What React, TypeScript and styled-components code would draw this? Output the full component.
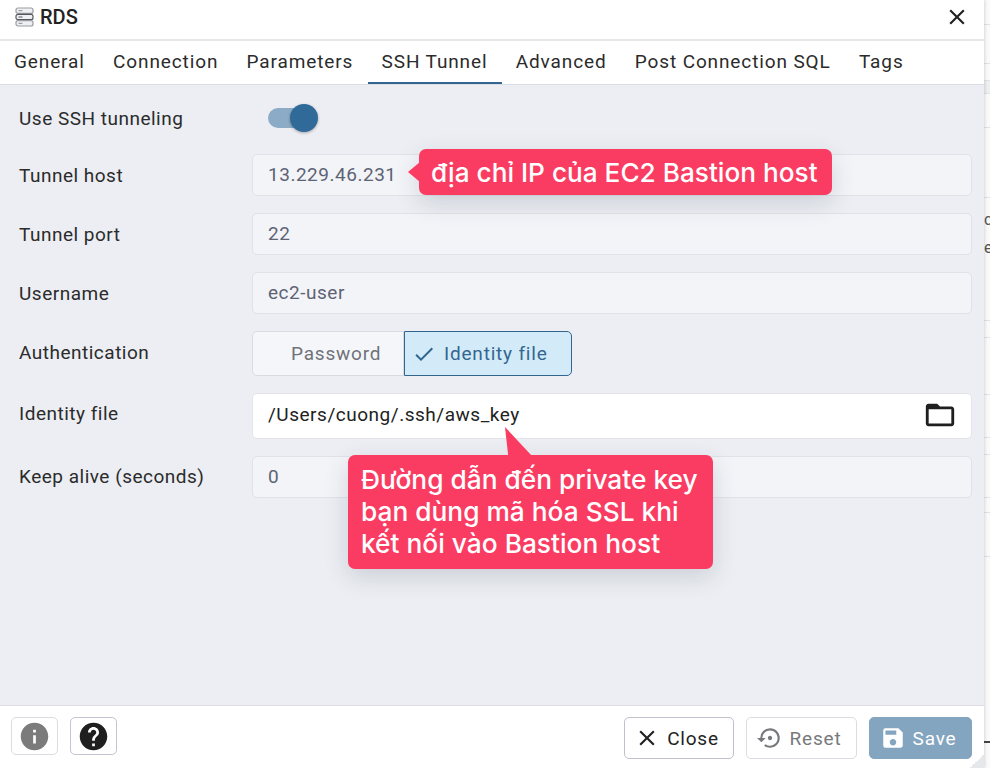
import React from 'react';
import styled, {createGlobalStyle} from 'styled-components';
import {MdCheck, MdClose, MdFolderOpen, MdHelp, MdInfo, MdSave, MdSettingsBackupRestore} from 'react-icons/md';

const GlobalStyle = createGlobalStyle`
  html, body {
    margin: 0;
    padding: 0;
    background: #fff;
  }
  body {
    font-family: Roboto, "Liberation Sans", sans-serif;
    color: #222;
  }
`;

const Page = styled.div`
  position: relative;
  display: flex;
  width: 990px;
  height: 768px;
  overflow: hidden;
`;

const Dialog = styled.div`
  display: flex;
  flex-direction: column;
  width: 984px;
  height: 768px;
  background: #fff;
  box-shadow: 1px 0 3px rgba(0, 0, 0, 0.14);
  position: relative;
  z-index: 1;
`;

const TitleBar = styled.div`
  display: flex;
  align-items: center;
  height: 41px;
  padding: 0 14px 5px 15px;
  box-sizing: border-box;
  border-bottom: 2px solid #e6e7ea;
  flex: none;
`;

const TitleText = styled.span`
  flex: 1;
  margin-left: 5px;
  font-size: 20px;
  font-weight: 500;
  color: #222;
`;

const TabBar = styled.div`
  display: flex;
  height: 44px;
  flex: none;
  box-sizing: border-box;
  border-bottom: 1px solid #dcdee3;
`;

const Tab = styled.div<{$active?: boolean}>`
  display: flex;
  align-items: center;
  height: 43px;
  padding: 0 14.3px 0 14px;
  box-sizing: border-box;
  font-size: 19px;
  letter-spacing: 0.88px;
  color: #2b2b2b;
  border-bottom: 2px solid ${p => (p.$active ? '#326690' : 'transparent')};
`;

const FormBody = styled.div`
  flex: 1;
  display: flex;
  flex-direction: column;
  gap: 17px;
  padding: 17px 12px 0 19px;
  background: #eceef3;
`;

const Row = styled.div<{$height: number}>`
  display: grid;
  grid-template-columns: 233px 1fr;
  align-items: center;
  height: ${p => p.$height}px;
`;

const Label = styled.label<{$lift?: number}>`
  margin-bottom: ${p => p.$lift || 0}px;
  font-size: 19px;
  letter-spacing: 0.5px;
  color: #2b2b2b;
`;

const Input = styled.div<{$editable?: boolean}>`
  display: flex;
  align-items: center;
  justify-content: space-between;
  height: 100%;
  padding: 0 14px ${p => (p.$editable ? 3 : 2)}px 15px;
  box-sizing: border-box;
  border: 1px solid ${p => (p.$editable ? '#e4e5ea' : '#e0e2e8')};
  border-radius: 5px;
  background: ${p => (p.$editable ? '#fff' : '#f3f4f8')};
  color: ${p => (p.$editable ? '#222' : '#5d6375')};
  font-size: 19px;
  letter-spacing: 0.52px;
`;

const Toggle = styled.div`
  position: relative;
  width: 48px;
  height: 20px;
  margin: -4px 0 0 16px;
  border-radius: 10px;
  background: #8cabc6;
`;

const ToggleKnob = styled.div`
  position: absolute;
  top: -4px;
  right: -2px;
  width: 28px;
  height: 28px;
  border-radius: 50%;
  background: #2f6a98;
  box-shadow: 0 1px 3px rgba(0, 0, 0, 0.3);
`;

const Segments = styled.div`
  display: flex;
  height: 100%;
`;

const Segment = styled.div<{$active?: boolean}>`
  display: flex;
  align-items: center;
  gap: 8px;
  box-sizing: border-box;
  width: ${p => (p.$active ? 168 : 152)}px;
  padding-left: ${p => (p.$active ? 7 : 38)}px;
  font-size: 19px;
  letter-spacing: 0.8px;
  border: 1px solid ${p => (p.$active ? '#326690' : '#d9dbe1')};
  border-radius: ${p => (p.$active ? '0 5px 5px 0' : '5px 0 0 5px')};
  background: ${p => (p.$active ? '#d3ebf9' : '#f5f6f9')};
  color: ${p => (p.$active ? '#326690' : '#6f7278')};
`;

const Footer = styled.div`
  display: flex;
  align-items: flex-start;
  justify-content: space-between;
  height: 63px;
  flex: none;
  padding: 11px 12px 0 11px;
  box-sizing: border-box;
  border-top: 1px solid #dcdee3;
  background: #fff;
`;

const ButtonGroup = styled.div<{$gap: number}>`
  display: flex;
  gap: ${p => p.$gap}px;
`;

const IconButton = styled.div<{$muted?: boolean}>`
  display: flex;
  align-items: center;
  justify-content: center;
  width: 47px;
  height: 38px;
  box-sizing: border-box;
  border: 1px solid ${p => (p.$muted ? '#dcdde2' : '#c3c5d0')};
  border-radius: 5px;
  color: ${p => (p.$muted ? '#7b7b7b' : '#1f1f1f')};
`;

const TextButton = styled.div<{$kind: 'default' | 'disabled' | 'primary'; $width: number}>`
  display: flex;
  align-items: center;
  justify-content: center;
  gap: 7px;
  width: ${p => p.$width}px;
  height: 42px;
  padding-right: 5px;
  box-sizing: border-box;
  border-radius: 5px;
  font-size: 19px;
  letter-spacing: 0.8px;
  border: 1px solid
    ${p => (p.$kind === 'default' ? '#bfc1cc' : p.$kind === 'disabled' ? '#dcdde2' : '#84a5c0')};
  background: ${p => (p.$kind === 'primary' ? '#84a5c0' : '#fff')};
  color: ${p => (p.$kind === 'default' ? '#222' : p.$kind === 'disabled' ? '#77797d' : '#fff')};
`;

const ResizeGrip = styled.div`
  position: absolute;
  right: 0;
  bottom: 0;
  width: 14px;
  height: 14px;
  background: linear-gradient(135deg, transparent 50%, #e6e7ea 50%);
`;

const Backdrop = styled.div`
  display: flex;
  flex-direction: column;
  width: 6px;
  height: 768px;
  flex: none;
  background: #fafafa;
  overflow: hidden;
`;

const BackdropCell = styled.div<{$height: number; $tone?: string}>`
  height: ${p => p.$height}px;
  flex: none;
  box-sizing: border-box;
  border-bottom: 1px solid #e2e3e6;
  background: ${p => p.$tone || 'transparent'};
`;

const BackdropText = styled(BackdropCell)`
  padding-top: 8px;
  font-size: 16px;
  line-height: 28px;
  color: #555;
`;

const BackdropDash = styled.div`
  height: 2px;
  margin-top: 184px;
  background: #444;
`;

const Callout = styled.div`
  position: absolute;
  z-index: 2;
  background: #fb3c62;
  border-radius: 7px;
  color: #fff;
  font-family: Inter, Roboto, sans-serif;
  font-weight: 500;
  box-shadow: 0 8px 24px rgba(40, 50, 70, 0.16);
  box-sizing: border-box;
  &::before {
    content: '';
    position: absolute;
    background: #fb3c62;
  }
`;

const HostCallout = styled(Callout)`
  left: 419px;
  top: 149px;
  width: 413px;
  height: 46px;
  padding-left: 12px;
  font-size: 26.2px;
  line-height: 48px;
  white-space: nowrap;
  &::before {
    left: -11px;
    top: 13px;
    width: 12px;
    height: 20px;
    clip-path: polygon(100% 0, 0 50%, 100% 100%);
  }
`;

const KeyCallout = styled(Callout)`
  left: 348px;
  top: 455px;
  width: 365px;
  height: 114px;
  padding: 9px 0 0 13px;
  font-size: 26.3px;
  line-height: 32px;
  white-space: pre-line;
  &::before {
    left: 157px;
    top: -28px;
    width: 27px;
    height: 29px;
    clip-path: polygon(0 0, 100% 100%, 12% 100%);
  }
`;

const ServerIcon = () => (
  <svg width="20" height="20" viewBox="0 0 20 20">
    <g fill="#eef0f3" stroke="#9a9ca2" strokeWidth="1.2">
      <rect x="1" y="1" width="17" height="5.4" rx="2" />
      <rect x="1" y="7.3" width="17" height="5.4" rx="2" stroke="#55585f" />
      <rect x="1" y="13.6" width="17" height="5.4" rx="2" />
    </g>
    <g stroke="#8b8d92" strokeWidth="1">
      <path d="M3.5 3.7h4" />
      <path d="M3.5 10h4" stroke="#55585f" />
      <path d="M3.5 16.3h4" />
    </g>
  </svg>
);

export default function App() {
  return (
    <Page>
      <GlobalStyle />
      <Dialog>
        <TitleBar>
          <ServerIcon />
          <TitleText>RDS</TitleText>
          <MdClose size={26} color="#222" />
        </TitleBar>
        <TabBar>
          <Tab>General</Tab>
          <Tab>Connection</Tab>
          <Tab>Parameters</Tab>
          <Tab $active>SSH Tunnel</Tab>
          <Tab>Advanced</Tab>
          <Tab>Post Connection SQL</Tab>
          <Tab>Tags</Tab>
        </TabBar>
        <FormBody>
          <Row $height={35}>
            <Label $lift={2}>Use SSH tunneling</Label>
            <Toggle>
              <ToggleKnob />
            </Toggle>
          </Row>
          <Row $height={42}>
            <Label>Tunnel host</Label>
            <Input>13.229.46.231</Input>
          </Row>
          <Row $height={42}>
            <Label>Tunnel port</Label>
            <Input>22</Input>
          </Row>
          <Row $height={42}>
            <Label>Username</Label>
            <Input>ec2-user</Input>
          </Row>
          <Row $height={45}>
            <Label $lift={2}>Authentication</Label>
            <Segments>
              <Segment>Password</Segment>
              <Segment $active>
                <MdCheck size={24} />
                Identity file
              </Segment>
            </Segments>
          </Row>
          <Row $height={46}>
            <Label $lift={6}>Identity file</Label>
            <Input $editable>
              /Users/cuong/.ssh/aws_key
              <MdFolderOpen size={34} color="#1f1f1f" />
            </Input>
          </Row>
          <Row $height={42}>
            <Label $lift={2}>Keep alive (seconds)</Label>
            <Input>0</Input>
          </Row>
        </FormBody>
        <Footer>
          <ButtonGroup $gap={12}>
            <IconButton $muted>
              <MdInfo size={33} />
            </IconButton>
            <IconButton>
              <MdHelp size={33} />
            </IconButton>
          </ButtonGroup>
          <ButtonGroup $gap={12}>
            <TextButton $kind="default" $width={110}>
              <MdClose size={26} />
              Close
            </TextButton>
            <TextButton $kind="disabled" $width={111}>
              <MdSettingsBackupRestore size={26} />
              Reset
            </TextButton>
            <TextButton $kind="primary" $width={103}>
              <MdSave size={26} />
              Save
            </TextButton>
          </ButtonGroup>
        </Footer>
        <ResizeGrip />
      </Dialog>
      <Backdrop>
        <BackdropCell $height={25} />
        <BackdropCell $height={39} />
        <BackdropCell $height={17} />
        <BackdropCell $height={13} $tone="#eeeff1" />
        <BackdropCell $height={34} />
        <BackdropCell $height={70} />
        <BackdropText $height={123}>
          co
          <br />
          e
        </BackdropText>
        <BackdropCell $height={17} />
        <BackdropCell $height={57} />
        <BackdropCell $height={43} />
        <BackdropCell $height={17} />
        <BackdropCell $height={43} />
        <BackdropCell $height={15} />
        <BackdropCell $height={44} />
        <BackdropDash />
      </Backdrop>
      <HostCallout>địa chỉ IP của EC2 Bastion host</HostCallout>
      <KeyCallout>{'Đường dẫn đến private key\nbạn dùng mã hóa SSL khi\nkết nối vào Bastion host'}</KeyCallout>
    </Page>
  );
}
